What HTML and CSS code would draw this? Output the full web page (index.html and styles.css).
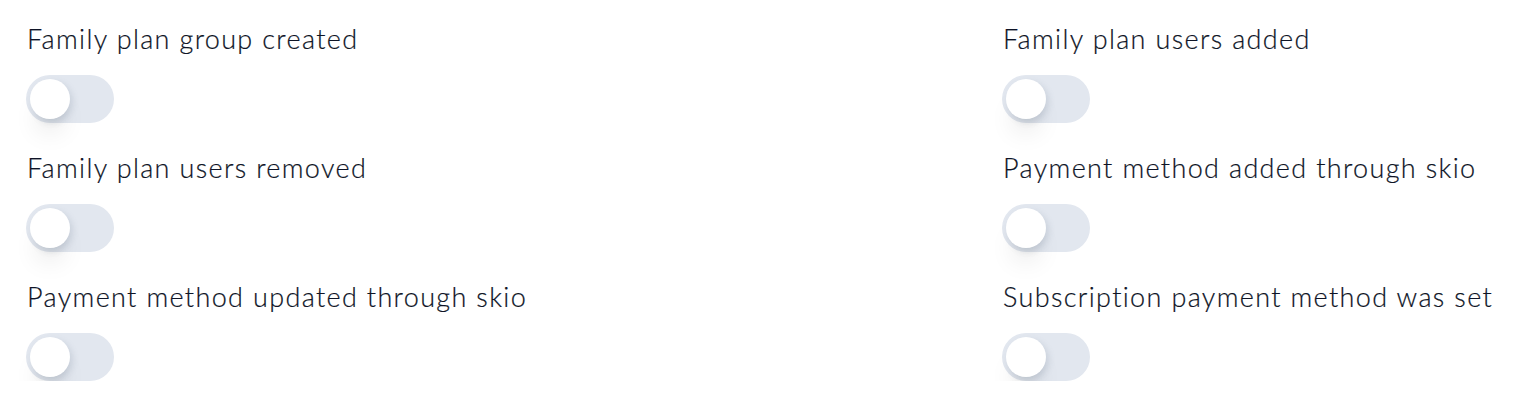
FILE: index.html
```html
<!DOCTYPE html>
<html lang="en">
<head>
<meta charset="utf-8">
<title>Notification settings</title>
<link rel="stylesheet" href="styles.css">
</head>
<body>
<div class="settings">
  <div class="setting">
    <div class="label">Family plan group created</div>
    <button class="toggle" type="button" aria-pressed="false"><span class="knob"></span></button>
  </div>
  <div class="setting">
    <div class="label">Family plan users added</div>
    <button class="toggle" type="button" aria-pressed="false"><span class="knob"></span></button>
  </div>
  <div class="setting">
    <div class="label">Family plan users removed</div>
    <button class="toggle" type="button" aria-pressed="false"><span class="knob"></span></button>
  </div>
  <div class="setting">
    <div class="label">Payment method added through skio</div>
    <button class="toggle" type="button" aria-pressed="false"><span class="knob"></span></button>
  </div>
  <div class="setting">
    <div class="label">Payment method updated through skio</div>
    <button class="toggle" type="button" aria-pressed="false"><span class="knob"></span></button>
  </div>
  <div class="setting">
    <div class="label">Subscription payment method was set</div>
    <button class="toggle" type="button" aria-pressed="false"><span class="knob"></span></button>
  </div>
</div>
</body>
</html>
```
FILE: styles.css
```css
html, body {
  margin: 0;
  padding: 0;
  background: #ffffff;
}

body {
  font-family: Lato, "Noto Sans", sans-serif;
  color: #0e1426;
}

.settings {
  display: grid;
  grid-template-columns: 976px 1fr;
  row-gap: 27px;
  padding: 21px 27px 0 26px;
}

.setting {
  display: flex;
  flex-direction: column;
  align-items: flex-start;
  gap: 18px;
}

.label {
  margin-left: 1px;
  font-size: 27px;
  font-weight: 300;
  line-height: 36px;
  letter-spacing: 1.35px;
  white-space: nowrap;
  -webkit-text-stroke: 0.2px #0e1426;
}

.toggle {
  display: flex;
  align-items: center;
  width: 88px;
  height: 48px;
  padding: 4px;
  border: 0;
  border-radius: 24px;
  background: #e2e7ef;
  cursor: pointer;
}

.knob {
  width: 40px;
  height: 40px;
  border-radius: 50%;
  background: #ffffff;
  box-shadow: 3px 3px 6px rgba(100, 116, 139, 0.18),
              0 20px 25px -5px rgba(0, 0, 0, 0.08),
              0 10px 10px -5px rgba(0, 0, 0, 0.03);
}
```
